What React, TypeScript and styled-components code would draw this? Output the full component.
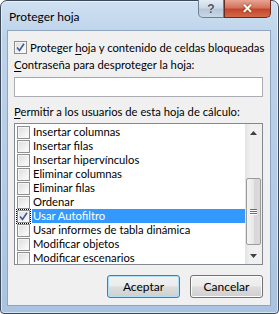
import React from 'react';
import styled, { createGlobalStyle } from 'styled-components';

const GlobalStyle = createGlobalStyle`
    html, body {
        margin: 0;
        padding: 0;
        background: #ffffff;
    }
    body {
        font-family: "Segoe UI", Lato, "Liberation Sans", sans-serif;
        font-size: 11.25px;
        color: #000000;
    }
`;

const Window = styled('div')`
    width: 279px;
    height: 314px;
    box-sizing: border-box;
    border: 1px solid #3c4a5c;
    border-radius: 7px 7px 4px 4px;
    background: linear-gradient(180deg, #cfe0f1 0%, #bdd3ea 12%, #b3cbe5 60%, #a9c3e0 100%);
    padding: 0 7px 7px 6px;
    display: flex;
    flex-direction: column;
    box-shadow: inset 0 0 0 1px rgba(255, 255, 255, 0.55);
`;

const TitleBar = styled('div')`
    height: 29px;
    display: flex;
    align-items: flex-start;
    justify-content: space-between;
    flex-shrink: 0;
`;

const Title = styled('span')`
    padding: 8px 0 0 2px;
    font-size: 12px;
    color: #000000;
`;

const CaptionButtons = styled('div')`
    display: flex;
    margin-top: -1px;
`;

const CaptionButton = styled('div')<{ $close?: boolean }>`
    width: ${(p) => (p.$close ? 47 : 26)}px;
    height: 18px;
    box-sizing: border-box;
    border: 1px solid ${(p) => (p.$close ? '#6b2a20' : '#6f7f93')};
    border-top: none;
    border-radius: ${(p) => (p.$close ? '0 0 5px 0' : '0 0 0 5px')};
    background: ${(p) =>
        p.$close
            ? 'linear-gradient(180deg, #e8a493 0%, #d2735c 45%, #c5452b 55%, #d06a48 100%)'
            : 'linear-gradient(180deg, #e3ebf4 0%, #cdd9e6 45%, #b7c7d9 55%, #c9d7e6 100%)'};
    display: flex;
    align-items: center;
    justify-content: center;
    color: ${(p) => (p.$close ? '#ffffff' : '#44546a')};
    font-family: "Liberation Sans", sans-serif;
    font-weight: bold;
    font-size: ${(p) => (p.$close ? 13 : 12)}px;
    text-shadow: ${(p) => (p.$close ? '0 0 2px #6b1a0a' : '0 0 1px #ffffff')};
`;

const Client = styled('div')`
    flex: 1;
    background: #f0f0f0;
    border: 1px solid #8fa5bf;
    display: flex;
    flex-direction: column;
    padding: 9px 6px 7px 6px;
`;

const CheckRow = styled('label')`
    display: flex;
    align-items: center;
    gap: 3px;
    height: 14px;
    white-space: nowrap;
`;

const Box = styled('span')<{ $checked?: boolean; $focus?: boolean }>`
    width: 13px;
    height: 13px;
    box-sizing: border-box;
    border: 1px solid #8e8f8f;
    background: linear-gradient(135deg, #dcdcdc 0%, #f4f4f4 70%, #ffffff 100%);
    box-shadow: inset 0 0 0 1px #f5f5f5;
    outline: ${(p) => (p.$focus ? '1px dotted #000000' : 'none')};
    outline-offset: 0;
    flex-shrink: 0;
    display: flex;
    align-items: center;
    justify-content: center;
`;

const Label = styled('div')<{ $top: number }>`
    margin-top: ${(p) => p.$top}px;
    height: 14px;
    line-height: 14px;
    white-space: nowrap;
`;

const Key = styled('span')`
    text-decoration: underline;
    text-underline-offset: 2px;
`;

const TextInput = styled('div')`
    margin-top: 5px;
    height: 20px;
    box-sizing: border-box;
    border: 1px solid #abadb3;
    border-top-color: #a3a6ad;
    background: #ffffff;
    margin-right: 1px;
`;

const ListBox = styled('div')`
    margin-top: 4px;
    height: 142px;
    box-sizing: border-box;
    border: 1px solid #828790;
    background: #ffffff;
    display: flex;
    margin-right: 1px;
`;

const Items = styled('div')`
    flex: 1;
    padding-top: 1px;
    padding-left: 2px;
`;

const Item = styled('div')`
    height: 14px;
    display: flex;
    align-items: center;
    gap: 2px;
`;

const ItemText = styled('span')<{ $selected?: boolean }>`
    flex: 1;
    height: 14px;
    line-height: 14px;
    padding-left: 1px;
    background: ${(p) => (p.$selected ? '#3399ff' : 'transparent')};
    color: ${(p) => (p.$selected ? '#ffffff' : '#000000')};
    white-space: nowrap;
`;

const ScrollBar = styled('div')`
    width: 17px;
    background: linear-gradient(90deg, #e3e3e3 0%, #f0f0f0 30%, #f0f0f0 100%);
    display: flex;
    flex-direction: column;
    align-items: center;
`;

const Arrow = styled('div')`
    height: 17px;
    width: 17px;
    display: flex;
    align-items: center;
    justify-content: center;
`;

const Track = styled('div')`
    flex: 1;
    width: 100%;
    display: flex;
    flex-direction: column;
    align-items: center;
    padding-top: 37px;
    padding-bottom: 1px;
`;

const Thumb = styled('div')`
    width: 15px;
    height: 67px;
    box-sizing: border-box;
    border: 1px solid #9a9a9a;
    border-radius: 2px;
    background: linear-gradient(90deg, #f4f4f4 0%, #e8e8e8 50%, #d8d8d8 51%, #dadada 100%);
    display: flex;
    flex-direction: column;
    align-items: center;
    justify-content: center;
    gap: 1px;
`;

const Grip = styled('span')`
    width: 7px;
    height: 1px;
    background: #6a6a6a;
    box-shadow: 0 1px 0 #ffffff;
`;

const Footer = styled('div')`
    margin-top: auto;
    display: flex;
    justify-content: flex-end;
    gap: 10px;
    padding-right: 1px;
`;

const Button = styled('div')<{ $default?: boolean }>`
    width: 73px;
    height: 23px;
    box-sizing: border-box;
    border: 1px solid ${(p) => (p.$default ? '#3c7fb1' : '#707070')};
    border-radius: 3px;
    background: linear-gradient(180deg, #f2f2f2 0%, #ebebeb 48%, #dddddd 52%, #cfcfcf 100%);
    box-shadow: inset 0 0 0 1px ${(p) => (p.$default ? '#aee0f8' : '#fcfcfc')};
    display: flex;
    align-items: center;
    justify-content: center;
    font-size: 12px;
`;

const items = [
    'Insertar columnas',
    'Insertar filas',
    'Insertar hipervínculos',
    'Eliminar columnas',
    'Eliminar filas',
    'Ordenar',
    'Usar Autofiltro',
    'Usar informes de tabla dinámica',
    'Modificar objetos',
    'Modificar escenarios',
];

const Check = () => (
    <svg width="9" height="9" viewBox="0 0 9 9">
        <path d="M1 4.5 L3.5 7.5 L8 0.8" fill="none" stroke="#3d5a98" strokeWidth="1.6" />
    </svg>
);

const App = () => {
    return (
        <>
            <GlobalStyle />
            <Window>
                <TitleBar>
                    <Title>Proteger hoja</Title>
                    <CaptionButtons>
                        <CaptionButton>?</CaptionButton>
                        <CaptionButton $close>✕</CaptionButton>
                    </CaptionButtons>
                </TitleBar>
                <Client>
                    <CheckRow>
                        <Box $checked>
                            <Check />
                        </Box>
                        <span>
                            Proteger <Key>h</Key>oja y contenido de celdas bloqueadas
                        </span>
                    </CheckRow>
                    <Label $top={4}>
                        <Key>C</Key>ontraseña para desproteger la hoja:
                    </Label>
                    <TextInput />
                    <Label $top={8}>
                        <Key>P</Key>ermitir a los usuarios de esta hoja de cálculo:
                    </Label>
                    <ListBox>
                        <Items>
                            {items.map((text, i) => (
                                <Item key={text}>
                                    <Box $checked={i === 6} $focus={i === 6}>
                                        {i === 6 && <Check />}
                                    </Box>
                                    <ItemText $selected={i === 6}>{text}</ItemText>
                                </Item>
                            ))}
                        </Items>
                        <ScrollBar>
                            <Arrow>
                                <svg width="7" height="4" viewBox="0 0 7 4">
                                    <path d="M0 4 L3.5 0 L7 4 Z" fill="#404040" />
                                </svg>
                            </Arrow>
                            <Track>
                                <Thumb>
                                    <Grip />
                                    <Grip />
                                    <Grip />
                                </Thumb>
                            </Track>
                            <Arrow>
                                <svg width="7" height="4" viewBox="0 0 7 4">
                                    <path d="M0 0 L7 0 L3.5 4 Z" fill="#404040" />
                                </svg>
                            </Arrow>
                        </ScrollBar>
                    </ListBox>
                    <Footer>
                        <Button $default>Aceptar</Button>
                        <Button>Cancelar</Button>
                    </Footer>
                </Client>
            </Window>
        </>
    );
};

export default App;
